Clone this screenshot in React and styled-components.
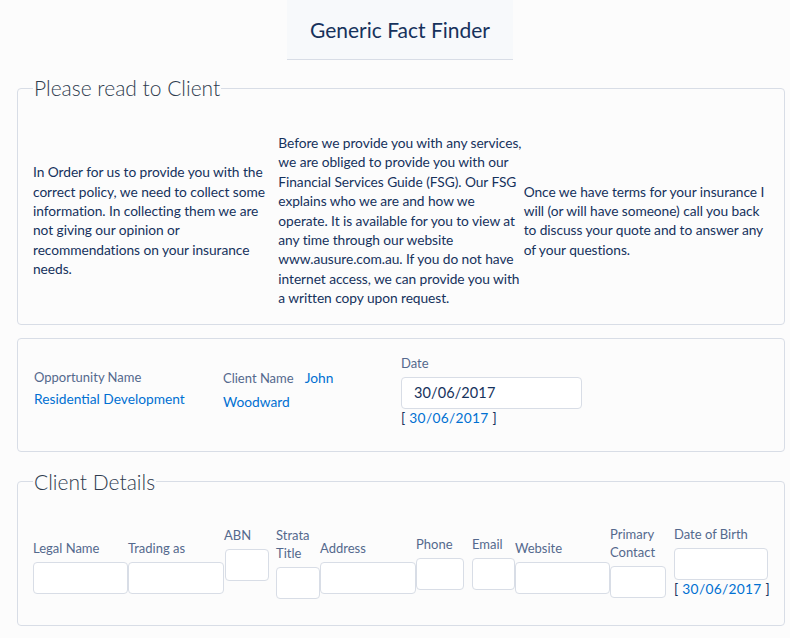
import React from "react";
import styled, { createGlobalStyle } from "styled-components";

const GlobalStyle = createGlobalStyle`
  body {
    margin: 0;
    background: #fcfcfc;
    font-family: Lato, "Open Sans", sans-serif;
    color: #16325c;
  }
`;

const Page = styled.div`
  padding: 0 5px 12px 17px;
`;

const Header = styled.header`
  width: 226px;
  height: 59px;
  margin-left: 270px;
  background: #f7f9fb;
  border-bottom: 1px solid #d8dde6;
  display: flex;
  align-items: center;
  justify-content: center;
  font-size: 21px;
  color: #16325c;
`;

const Fieldset = styled.fieldset`
  margin: ${(p) => p.$top}px 0 0;
  padding: ${(p) => p.$pt}px 15px ${(p) => p.$pb}px;
  border: 1px solid #d8dde6;
  border-radius: 4px;
  min-width: 0;
  legend {
    padding: 0 1px;
    font-size: 21px;
    font-weight: 300;
    line-height: 26px;
    color: #2e3b4e;
  }
`;

const Card = styled.div`
  margin-top: 13px;
  border: 1px solid #d8dde6;
  border-radius: 4px;
  padding: 15px 15px 24px 16px;
  display: grid;
  grid-template-columns: 189px 150px 1fr;
  align-items: center;
  & > :nth-child(3) {
    margin-left: 28px;
  }
`;

const Notice = styled.div`
  display: grid;
  grid-template-columns: repeat(3, 1fr);
  align-items: center;
  p {
    margin: 0;
    font-size: 13.75px;
    line-height: 19.4px;
    letter-spacing: -0.06px;
  }
`;

const Label = styled.div`
  font-size: 13px;
  line-height: 18px;
  color: #54698d;
  margin-bottom: ${(p) => p.$gap ?? 5}px;
`;

const Value = styled.a`
  display: ${(p) => (p.$block ? "block" : "inline")};
  color: #0070d2;
  font-size: 13.75px;
  line-height: ${(p) => (p.$block ? 26 : 23)}px;
  text-decoration: none;
`;

const Inline = styled.div`
  font-size: 13px;
  line-height: 23px;
  color: #54698d;
  span {
    margin-right: 11px;
  }
`;

const Input = styled.input`
  box-sizing: border-box;
  display: block;
  width: ${(p) => p.$w}px;
  height: 32px;
  margin-left: ${(p) => p.$shift || 0}px;
  border: 1px solid #d8dde6;
  border-radius: 4px;
  background: #fff;
  padding: 0 12px;
  font-family: Lato, sans-serif;
  font-size: 14.5px;
  letter-spacing: 0.1px;
  color: #16325c;
  outline: none;
`;

const Helper = styled.div`
  font-size: 13.75px;
  line-height: 18px;
  white-space: nowrap;
  letter-spacing: 0.3px;
  color: #16325c;
  a {
    color: #0070d2;
    text-decoration: none;
  }
`;

const Row = styled.div`
  display: flex;
  align-items: center;
`;

const Cell = styled.div`
  flex: 0 0 ${(p) => p.$cw}px;
  padding-bottom: ${(p) => p.$trail || 0}px;
`;

const fields = [
  { label: "Legal Name", cw: 95, w: 95 },
  { label: "Trading as", cw: 95, w: 96 },
  { label: "ABN", cw: 52, w: 44, trail: 26, shift: 1 },
  { label: ["Strata", "Title"], cw: 44, w: 44, trail: 8 },
  { label: "Address", cw: 96, w: 96 },
  { label: "Phone", cw: 56, w: 48, trail: 8 },
  { label: "Email", cw: 43, w: 43, trail: 8 },
  { label: "Website", cw: 95, w: 95 },
  { label: ["Primary", "Contact"], cw: 64, w: 56, trail: 10 },
];

function DateHelper() {
  return (
    <Helper>
      [ <a href="#">30/06/2017</a> ]
    </Helper>
  );
}

export default function App() {
  return (
    <Page>
      <GlobalStyle />
      <Header>Generic Fact Finder</Header>

      <Fieldset $top={15} $pt={32} $pb={16}>
        <legend>Please read to Client</legend>
        <Notice>
          <p>
            In Order for us to provide you with the correct policy, we need to
            collect some information. In collecting them we are not giving our
            opinion or recommendations on your insurance needs.
          </p>
          <p>
            Before we provide you with any services, we are obliged to provide
            you with our Financial Services Guide (FSG). Our FSG explains who we
            are and how we operate. It is available for you to view at any time
            through our website www.ausure.com.au. If you do not have internet
            access, we can provide you with a written copy upon request.
          </p>
          <p>
            Once we have terms for your insurance I will (or will have someone)
            call you back to discuss your quote and to answer any of your
            questions.
          </p>
        </Notice>
      </Fieldset>

      <Card>
        <div>
          <Label $gap={0}>Opportunity Name</Label>
          <Value $block href="#">Residential Development</Value>
        </div>
        <Inline>
          <span>Client Name</span>
          <Value href="#">John Woodward</Value>
        </Inline>
        <div>
          <Label>Date</Label>
          <Input $w={181} defaultValue="30/06/2017" />
          <DateHelper />
        </div>
      </Card>

      <Fieldset $top={17} $pt={30} $pb={17}>
        <legend>Client Details</legend>
        <Row>
          {fields.map((f) => (
            <Cell key={f.cw + String(f.label)} $cw={f.cw} $trail={f.trail}>
              <Label>
                {Array.isArray(f.label)
                  ? f.label.map((l, i) => <div key={i}>{l}</div>)
                  : f.label}
              </Label>
              <Input $w={f.w} $shift={f.shift} />
            </Cell>
          ))}
          <Cell $cw={94} $trail={10}>
            <Label>Date of Birth</Label>
            <Input $w={94} />
            <DateHelper />
          </Cell>
        </Row>
      </Fieldset>
    </Page>
  );
}
